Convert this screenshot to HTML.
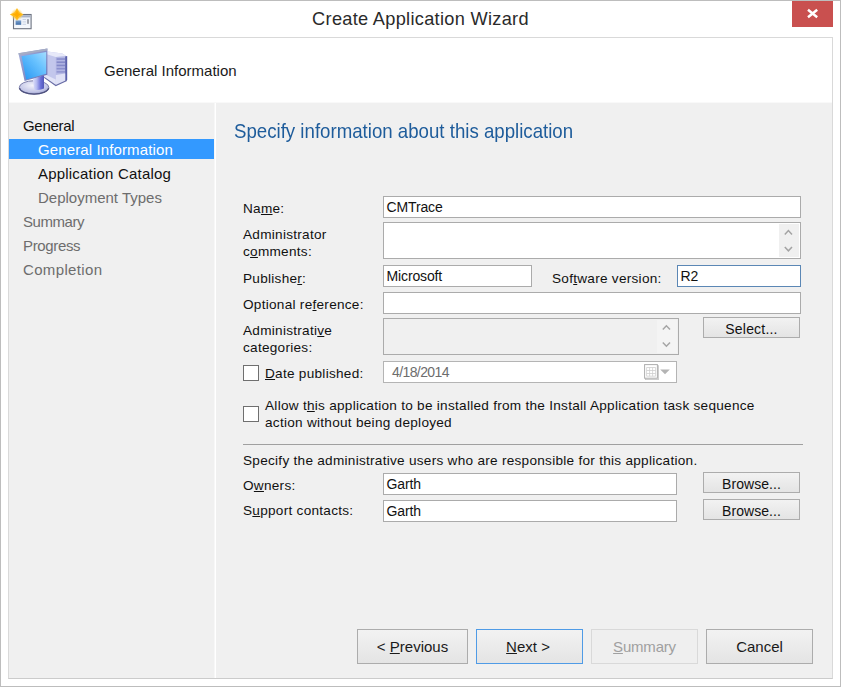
<!DOCTYPE html>
<html>
<head>
<meta charset="utf-8">
<title>Create Application Wizard</title>
<style>
*{box-sizing:border-box;margin:0;padding:0}
html,body{width:841px;height:687px;overflow:hidden;background:#fff}
body{position:relative;font-family:"Liberation Sans",Arial,sans-serif;font-size:13.33px;color:#111;}
.abs{position:absolute}
#frame{left:0;top:0;width:841px;height:687px;border:1px solid #bdbdbd;}
#title{left:0;top:8px;width:841px;text-align:center;font-size:18.2px;letter-spacing:.3px;line-height:22px;color:#2a2a2a;white-space:nowrap}
#close{left:792px;top:1px;width:41px;height:26px;background:#c9504f}
#panel{left:8px;top:37px;width:825px;height:642px;border:1px solid #d9d9d9;border-bottom-color:#cbcbcb;background:#fff}
#side{left:9px;top:103px;width:205px;height:575px;background:#f0f0f0}
#main{left:216px;top:103px;width:616px;height:575px;background:#f0f0f0}
#hdr{left:104px;top:61px;font-size:15px;line-height:20px;color:#1a1a1a;white-space:nowrap}
.nav{left:0;width:205px;height:20px;font-size:15px;line-height:20px;white-space:nowrap}
.nav.l1{padding-left:14px}
.nav.l2{padding-left:29px}
.nav.dim{color:#6d6d6d}
.nav.sel{background:#3399ff;color:#fff}
#head{left:234px;top:120px;font-size:18.67px;line-height:24px;color:#1e5c9b;white-space:nowrap;transform:scaleY(1.06);transform-origin:0 18px}
.lbl{white-space:nowrap;line-height:17px;color:#111;font-size:13.6px;letter-spacing:.27px}
.inp{background:#fff;border:1px solid #ababab;height:22px;line-height:18px;font-size:14px;letter-spacing:-.15px;padding:1.4px 0 0 2.6px;white-space:nowrap;color:#111}
.btn{font-size:14px;letter-spacing:.2px;border:1px solid #acacac;background:linear-gradient(#f2f2f2,#e4e4e4);text-align:center;white-space:nowrap;color:#111}
.big{height:35px;width:107px;top:629px;font-size:15px;letter-spacing:0;line-height:33px;color:#1a1a1a}
u{text-decoration:underline;text-underline-offset:1px}
.cb{width:16px;height:16px;background:#fff;border:1px solid #6f6f6f}
</style>
</head>
<body>
<div id="frame" class="abs"></div>
<div id="title" class="abs">Create Application Wizard</div>
<div id="close" class="abs"><svg width="41" height="26" viewBox="0 0 41 26"><path d="M16 8.8 L25.2 16.2 M25.2 8.8 L16 16.2" stroke="#fff" stroke-width="2.5" fill="none"/></svg></div>
<div id="panel" class="abs"></div>

<!-- title bar icon -->
<svg class="abs" style="left:8px;top:6px" width="28" height="26" viewBox="8 6 28 26">
  <defs>
    <radialGradient id="sg" cx="50%" cy="50%" r="50%">
      <stop offset="0" stop-color="#ffb000"/><stop offset=".55" stop-color="#ffc83a"/><stop offset="1" stop-color="#ffe08a" stop-opacity=".0"/>
    </radialGradient>
    <linearGradient id="wb" x1="0" y1="0" x2="0" y2="1"><stop offset="0" stop-color="#e9eef8"/><stop offset="1" stop-color="#f6f9fd"/></linearGradient>
    <linearGradient id="bb" x1="0" y1="0" x2="0" y2="1"><stop offset="0" stop-color="#7ea2cf"/><stop offset="1" stop-color="#3f6ea8"/></linearGradient>
  </defs>
  <rect x="13.5" y="14.5" width="17.6" height="14.2" fill="url(#wb)" stroke="#6d7381" stroke-width="1.1"/>
  <rect x="14.3" y="15.2" width="16" height="2.2" fill="#aab3c6"/>
  <rect x="15.6" y="20.4" width="5.6" height="4.4" fill="url(#bb)"/>
  <rect x="22.6" y="19" width="3.4" height="1" fill="#c9d3e4"/>
  <rect x="22.6" y="21.4" width="3.4" height="1" fill="#c9d3e4"/>
  <rect x="22.6" y="23.8" width="3.4" height="1" fill="#c9d3e4"/>
  <rect x="27.2" y="19.2" width="1.6" height="4.6" fill="#8a8e98"/>
  <circle cx="16.9" cy="14.6" r="6.4" fill="url(#sg)" opacity=".75"/>
  <path d="M17 8 L19.3 12.3 L23.6 14.6 L19.3 16.9 L17 20.6 L14.7 16.9 L9.8 14.6 L14.7 12.3 Z" fill="#ffbb1c"/>
  <path d="M17 10.6 L18.3 13.3 L20.6 14.6 L18.3 15.9 L17 18 L15.7 15.9 L12.6 14.6 L15.7 13.3 Z" fill="#ffac00"/>
</svg>

<!-- computer icon -->
<svg class="abs" style="left:10px;top:40px" width="70" height="60" viewBox="10 40 70 60">
  <defs>
    <linearGradient id="scr" x1="1" y1="0" x2="0" y2="1">
      <stop offset="0" stop-color="#a4dcff"/><stop offset=".35" stop-color="#6cc4ff"/><stop offset="1" stop-color="#2494f2"/>
    </linearGradient>
    <linearGradient id="frm" x1="0" y1="0" x2="1" y2="1">
      <stop offset="0" stop-color="#a9b1dc"/><stop offset="1" stop-color="#6670b4"/>
    </linearGradient>
    <linearGradient id="twr" x1="0" y1="0" x2="1" y2="0">
      <stop offset="0" stop-color="#d9dbf3"/><stop offset="1" stop-color="#b3b7e2"/>
    </linearGradient>
    <linearGradient id="nck" x1="0" y1="0" x2="1" y2="0">
      <stop offset="0" stop-color="#dfe2fa"/><stop offset=".35" stop-color="#b4b9f0"/><stop offset=".7" stop-color="#6a6fd8"/><stop offset="1" stop-color="#5057b8"/>
    </linearGradient>
    <radialGradient id="bse" cx="45%" cy="35%" r="70%">
      <stop offset="0" stop-color="#f3f3fb"/><stop offset=".7" stop-color="#c2c5e6"/><stop offset="1" stop-color="#8f93c4"/>
    </radialGradient>
    <filter id="soft" x="-5%" y="-5%" width="110%" height="110%"><feGaussianBlur stdDeviation=".35"/></filter>
  </defs>
  <g filter="url(#soft)">
  <!-- tower -->
  <path d="M47.6 51.6 L62.4 53.4 L66.6 56.2 L66.6 80.4 L55.8 85.5 L44.2 77.4 L44.2 53 Z" fill="#c3c7ec"/>
  <path d="M47.6 51.6 L62.4 53.4 L66.6 56.2 L55.8 57 L46 54 Z" fill="#e7e9f9"/>
  <path d="M55.8 57 L66.6 56.2 L66.6 80.4 L55.8 85.5 Z" fill="#b3b7e4"/>
  <path d="M65.2 56.6 L67.2 56 L67.2 80 L65.2 81.2 Z" fill="#5a61ab"/>
  <rect x="56.6" y="58.2" width="8.4" height="1.7" fill="#8b90ce"/>
  <rect x="56.6" y="61.4" width="8.4" height="1.7" fill="#858ac9"/>
  <rect x="56.6" y="64.6" width="8.4" height="1.7" fill="#858ac9"/>
  <rect x="56.6" y="67.8" width="8.4" height="1.7" fill="#8b90ce"/>
  <rect x="56.6" y="71" width="8.4" height="1.7" fill="#9498d2"/>
  <path d="M55.8 75 L65.2 73.6 L65.2 81.2 L55.8 85.5 Z" fill="#dfe1f6"/>
  <path d="M44.2 74 L55.8 79.5 L55.8 85.5 L44.2 77.4 Z" fill="#e2e4f7"/>
  <path d="M44.2 77.4 L55.8 85.5 L66.8 80.4" fill="none" stroke="#6a6ea6" stroke-width="1.1"/>
  <!-- base -->
  <ellipse cx="34.1" cy="87.4" rx="14.8" ry="6.7" fill="url(#bse)" stroke="#7073a2" stroke-width=".9"/>
  <path d="M19.4 88.2 A14.8 6.7 0 0 0 48.8 88.2" fill="none" stroke="#4f527f" stroke-width="1.3"/>
  <!-- neck -->
  <path d="M32.8 79 L44 75 L44 88.6 Q39 91 34.2 89.4 Z" fill="url(#nck)"/>
  <!-- monitor -->
  <path d="M18.4 53.2 L47.4 48.4 L47.4 74.8 L24.6 81 Z" fill="url(#frm)"/>
  <path d="M18.4 53.2 L47.4 48.4 L47.4 50.4 L19 55.2 Z" fill="#a6adc4"/>
  <path d="M21.5 56.2 L46.2 52 L46.2 73.8 L26.2 79.4 Z" fill="url(#scr)"/>
  </g>
</svg>
<div id="hdr" class="abs">General Information</div>
<div id="side" class="abs">
  <div class="abs nav l1" style="top:13px;letter-spacing:-.3px">General</div>
  <div class="abs nav l2 sel" style="top:36px;line-height:22px;letter-spacing:.12px">General Information</div>
  <div class="abs nav l2" style="top:61px;letter-spacing:.2px">Application Catalog</div>
  <div class="abs nav l2 dim" style="top:85px">Deployment Types</div>
  <div class="abs nav l1 dim" style="top:109px;letter-spacing:-.45px">Summary</div>
  <div class="abs nav l1 dim" style="top:133px;letter-spacing:-.35px">Progress</div>
  <div class="abs nav l1 dim" style="top:157px;letter-spacing:.35px">Completion</div>
</div>
<div id="main" class="abs"></div>
<div class="abs" style="left:9px;top:102px;width:823px;height:1px;background:#f9f9f9"></div>
<div class="abs" style="left:214px;top:103px;width:1px;height:575px;background:#f7f7f7"></div>
<div id="head" class="abs">Specify information about this application</div>

<!-- labels -->
<div class="abs lbl" style="left:243px;top:200px">Na<u>m</u>e:</div>
<div class="abs lbl" style="left:243px;top:226px">Administrator<br>c<u>o</u>mments:</div>
<div class="abs lbl" style="left:243px;top:270px">Publishe<u>r</u>:</div>
<div class="abs lbl" style="left:552px;top:270px">Sof<u>t</u>ware version:</div>
<div class="abs lbl" style="left:243px;top:296px">Optional re<u>f</u>erence:</div>
<div class="abs lbl" style="left:243px;top:322px">Administrati<u>v</u>e<br>categories:</div>
<div class="abs lbl" style="left:265px;top:365px"><u>D</u>ate published:</div>
<div class="abs lbl" style="left:265px;top:397px">Allow t<u>h</u>is application to be installed from the Install Application task sequence<br>action without being deployed</div>
<div class="abs lbl" style="left:243px;top:452px">Specify the administrative users who are responsible for this application.</div>
<div class="abs lbl" style="left:243px;top:477px">O<u>w</u>ners:</div>
<div class="abs lbl" style="left:243px;top:502px">S<u>u</u>pport contacts:</div>

<!-- inputs -->
<div class="abs inp" style="left:383px;top:196px;width:418px">CMTrace</div>
<div class="abs inp" style="left:383px;top:222px;width:418px;height:37px"></div>
<div class="abs inp" style="left:383px;top:265px;width:149px">Microsoft</div>
<div class="abs inp" style="left:677px;top:265px;width:124px;border-color:#5b87b5">R2</div>
<div class="abs inp" style="left:383px;top:292px;width:418px"></div>
<div class="abs inp" style="left:383px;top:318px;width:296px;height:37px;background:#f0f0f0"></div>
<div class="abs inp" style="left:383px;top:361px;width:294px;border-color:#b4b4b4;color:#6d6d6d;padding-left:8px;letter-spacing:-.6px">4/18/2014</div>
<div class="abs inp" style="left:383px;top:473px;width:294px">Garth</div>
<div class="abs inp" style="left:383px;top:500px;width:294px">Garth</div>


<!-- comments scrollbar -->
<div class="abs" style="left:779px;top:224px;width:20px;height:33px;background:#f0f0f0"></div>
<svg class="abs" style="left:779px;top:223px" width="20" height="35" viewBox="0 0 20 35"><path d="M5.8 11.4 L9.4 7.6 L13 11.4 M5.8 24 L9.4 27.8 L13 24" fill="none" stroke="#a3a3a3" stroke-width="1.5"/></svg>
<!-- categories scrollbar -->
<div class="abs" style="left:657px;top:320px;width:20px;height:33px;background:#f4f4f4"></div>
<svg class="abs" style="left:657px;top:319px" width="20" height="35" viewBox="0 0 20 35"><path d="M5.8 10.6 L9.4 6.8 L13 10.6 M5.8 23.4 L9.4 27.2 L13 23.4" fill="none" stroke="#a6a6a6" stroke-width="1.5"/></svg>
<!-- date picker icon -->
<svg class="abs" style="left:642px;top:362px" width="32" height="20" viewBox="642 362 32 20">
  <rect x="645.6" y="365.6" width="13" height="14" fill="#f4f4f4" stroke="#c4c4c4" stroke-width=".8"/>
  <rect x="644.6" y="364.6" width="12.8" height="13.6" fill="#fff" stroke="#adadad" stroke-width="1"/>
  <path d="M646.6 367.5 H655.6 M646.6 370.5 H655.6 M646.6 373.5 H655.6 M646.6 376.2 H655.6 M646.6 367.5 V376.2 M649.6 367.5 V376.2 M652.6 367.5 V376.2 M655.6 367.5 V376.2" stroke="#cfcfcf" stroke-width=".8" fill="none"/>
  <path d="M660.2 369.4 H669.8 L665 374.2 Z" fill="#b4b4b4"/>
</svg>
<div class="abs cb" style="left:243px;top:365px"></div>
<div class="abs cb" style="left:243px;top:406px"></div>
<div class="abs" style="left:243px;top:444px;width:560px;height:1px;background:#a0a0a0"></div>

<div class="abs btn" style="left:703px;top:317px;width:97px;height:21px;line-height:22px">Select...</div>
<div class="abs btn" style="left:703px;top:472px;width:97px;height:21px;line-height:22px;letter-spacing:.05px">Browse...</div>
<div class="abs btn" style="left:703px;top:499px;width:97px;height:21px;line-height:22px;letter-spacing:.05px">Browse...</div>

<div class="abs btn big" style="left:357px;width:111px">&lt; <u>P</u>revious</div>
<div class="abs btn big" style="left:476px;border-color:#4f9be6;padding-right:3px"><u>N</u>ext &gt;</div>
<div class="abs btn big" style="left:591px;color:#a0a0a0;border-color:#d9d9d9;background:#efefef;letter-spacing:-.2px"><u>S</u>ummary</div>
<div class="abs btn big" style="left:706px">Cancel</div>
</body>
</html>
